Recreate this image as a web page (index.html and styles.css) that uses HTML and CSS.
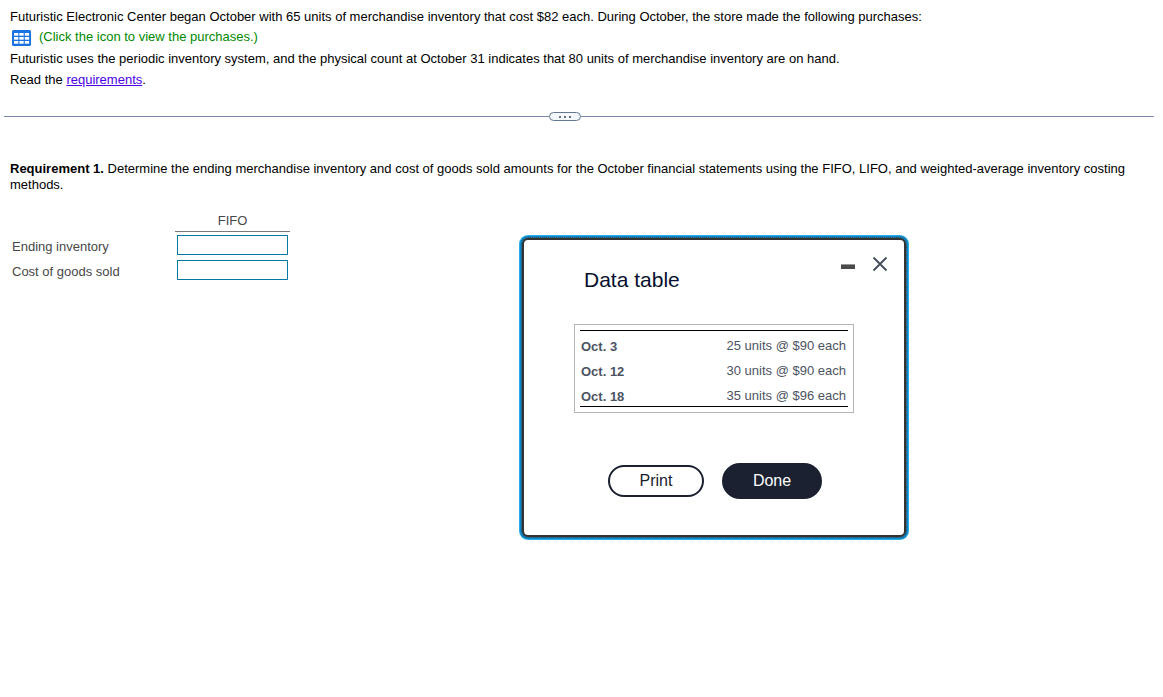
FILE: index.html
```html
<!DOCTYPE html>
<html lang="en">
<head>
    <meta charset="UTF-8">
    <meta name="viewport" content="width=device-width, initial-scale=1.0">
    <title>Inventory Costing</title>
    <link rel="stylesheet" href="styles.css">
</head>
<body>
    <div class="problem">
        <p class="intro">Futuristic Electronic Center began October with 65 units of merchandise inventory that cost $82 each. During October, the store made the following purchases:</p>
        <div class="view-data">
            <svg class="table-icon" width="19" height="16" viewBox="0 0 19 16">
                <rect width="19" height="16" rx="1.5" fill="#1a73e0"/>
                <g fill="#fff">
                    <rect x="2" y="3" width="4.3" height="2.7"/>
                    <rect x="7.4" y="3" width="4.3" height="2.7"/>
                    <rect x="12.8" y="3" width="4.3" height="2.7"/>
                    <rect x="2" y="7" width="4.3" height="2.7"/>
                    <rect x="7.4" y="7" width="4.3" height="2.7"/>
                    <rect x="12.8" y="7" width="4.3" height="2.7"/>
                    <rect x="2" y="11" width="4.3" height="2.7"/>
                    <rect x="7.4" y="11" width="4.3" height="2.7"/>
                    <rect x="12.8" y="11" width="4.3" height="2.7"/>
                </g>
            </svg>
            <span>(Click the icon to view the purchases.)</span>
        </div>
        <p class="system">Futuristic uses the periodic inventory system, and the physical count at October 31 indicates that 80 units of merchandise inventory are on hand.</p>
        <p class="read">Read the <a href="#">requirements</a>.</p>
    </div>

    <div class="divider">
        <div class="handle"><i></i><i></i><i></i></div>
    </div>

    <div class="requirement">
        <p><b>Requirement 1.</b> Determine the ending merchandise inventory and cost of goods sold amounts for the October financial statements using the FIFO, LIFO, and weighted-average inventory costing methods.</p>
    </div>

    <div class="answers">
        <div class="answer-head">FIFO</div>
        <div class="answer-row">
            <label for="ending">Ending inventory</label>
            <input type="text" id="ending">
        </div>
        <div class="answer-row">
            <label for="cogs">Cost of goods sold</label>
            <input type="text" id="cogs">
        </div>
    </div>

    <div class="dialog">
        <div class="dialog-head">
            <h2>Data table</h2>
            <div class="minimize"></div>
            <svg class="close" width="16" height="16" viewBox="0 0 16 16">
                <path d="M1.5 1.5L14.5 14.5M14.5 1.5L1.5 14.5" stroke="#414c5c" stroke-width="1.8" fill="none"/>
            </svg>
        </div>
        <div class="data-box">
            <div class="data-table">
                <div class="data-row"><b>Oct. 3</b><span>25 units @ $90 each</span></div>
                <div class="data-row"><b>Oct. 12</b><span>30 units @ $90 each</span></div>
                <div class="data-row"><b>Oct. 18</b><span>35 units @ $96 each</span></div>
            </div>
        </div>
        <div class="buttons">
            <button class="print">Print</button>
            <button class="done">Done</button>
        </div>
    </div>
</body>
</html>
```
FILE: styles.css
```css
* {
    box-sizing: border-box;
}

body {
    margin: 0;
    height: 697px;
    overflow: hidden;
    background-color: #fff;
    color: #000;
    font-family: "Liberation Sans", Arial, sans-serif;
    font-size: 13px;
    line-height: 16px;
}

p {
    margin: 0;
}

.problem {
    height: 112px;
    padding: 9px 0 0 10px;
    white-space: nowrap;
}

.view-data {
    display: flex;
    height: 26px;
    padding: 4px 0 0 2px;
    color: #008a00;
}

.table-icon {
    margin: 1px 8px 0 0;
}

.read {
    margin-top: 5px;
}

.read a {
    color: #4b00e8;
}

/* divider */
.divider {
    display: flex;
    align-items: center;
    height: 9px;
    margin: 0 9px 0 4px;
}

.divider::before,
.divider::after {
    content: "";
    height: 1px;
    background-color: #7b8aa8;
}

.divider::before {
    width: 545px;
}

.divider::after {
    flex: 1;
}

.handle {
    display: flex;
    justify-content: center;
    align-items: center;
    gap: 3px;
    width: 32px;
    height: 9px;
    border: 1px solid #647791;
    border-radius: 5px;
    background-color: #f5f8fa;
}

.handle i {
    width: 2px;
    height: 2px;
    background-color: #65727d;
}

.requirement {
    width: 1140px;
    padding: 40px 0 0 10px;
}

/* answer table */
.answers {
    width: 290px;
    padding: 19px 0 0 12px;
    color: #484848;
}

.answer-head {
    width: 115px;
    height: 20px;
    margin: 0 0 3px 163px;
    padding-top: 1px;
    border-bottom: 1px solid #777;
    text-align: center;
}

.answer-row {
    display: flex;
    align-items: flex-start;
    height: 25px;
}

.answer-row label {
    width: 165px;
    padding-top: 4px;
}

.answer-row input {
    width: 111px;
    height: 20px;
    padding: 0;
    border: 1px solid #007aa2;
    border-radius: 0;
    background-color: #fff;
}

/* data table popup */
.dialog {
    position: absolute;
    left: 522px;
    top: 238px;
    width: 384px;
    height: 299px;
    border: 2px solid #333;
    border-radius: 6px;
    background-color: #fff;
    outline: 1px dotted #444;
    box-shadow: 0 0 0 2px #0787c8, 0 0 0 3px #29abe6;
    color: #4c5362;
}

.dialog-head {
    display: flex;
    height: 84px;
    padding-left: 60px;
}

.dialog-head h2 {
    width: 257px;
    margin: 28px 0 0;
    color: #06102f;
    font-size: 21px;
    font-weight: normal;
    line-height: 24px;
}

.minimize {
    width: 14px;
    height: 5px;
    margin: 24px 17px 0 0;
    border-top: 1px solid #999;
    background-color: #4b4b4b;
}

.close {
    margin-top: 16px;
}

.data-box {
    width: 280px;
    height: 89px;
    margin-left: 50px;
    padding: 5px;
    border: 1px solid #b5b5b5;
}

.data-table {
    height: 77px;
    padding-top: 2px;
    border-top: 1px solid #000;
    border-bottom: 1px solid #000;
}

.data-row {
    display: flex;
    justify-content: space-between;
    height: 25px;
    padding: 5px 2px 0 1px;
}

.data-row b {
    padding-top: 1px;
}

.buttons {
    display: flex;
    align-items: center;
    gap: 18px;
    padding: 50px 0 0 84px;
}

.buttons button {
    padding: 0 0 1px;
    border: 2px solid #1b2130;
    border-radius: 18px;
    font-family: "Liberation Sans", Arial, sans-serif;
    font-size: 16px;
}

.print {
    width: 96px;
    height: 32px;
    background-color: #fff;
    color: #1b2130;
}

.done {
    width: 100px;
    height: 36px;
    background-color: #1b2130;
    color: #fff;
}
```
